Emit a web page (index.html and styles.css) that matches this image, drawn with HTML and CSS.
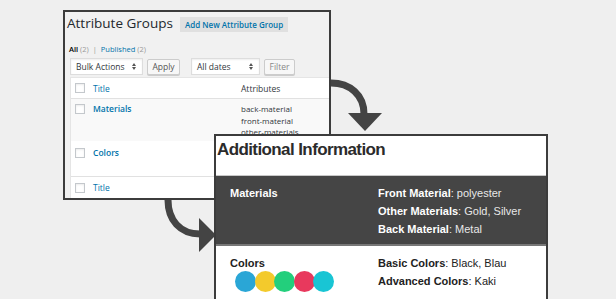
FILE: index.html
```html
<!DOCTYPE html>
<html lang="en">
<head>
    <meta charset="UTF-8">
    <meta name="viewport" content="width=device-width, initial-scale=1.0">
    <title>Attribute Groups</title>
    <link rel="stylesheet" href="styles.css">
</head>
<body>
    <div class="canvas">
        <!-- admin screen -->
        <section class="window wp-admin">
            <div class="page-title">
                <h1>Attribute Groups</h1>
                <span class="add-new">Add New Attribute Group</span>
            </div>

            <div class="subsubsub">
                <span class="current">All</span> <span class="count">(2)</span>
                <span class="sep">|</span>
                <a>Published</a> <span class="count">(2)</span>
            </div>

            <div class="tablenav">
                <div class="select bulk">Bulk Actions <svg class="updown" width="4" height="7" viewBox="0 0 4 7"><path d="M0 3 L2 0 L4 3 Z M0 4 L2 7 L4 4 Z" fill="#555"/></svg></div>
                <span class="button apply">Apply</span>
                <div class="select dates">All dates <svg class="updown" width="4" height="7" viewBox="0 0 4 7"><path d="M0 3 L2 0 L4 3 Z M0 4 L2 7 L4 4 Z" fill="#555"/></svg></div>
                <span class="button filter">Filter</span>
            </div>

            <div class="list-table">
                <div class="row head">
                    <span class="check"><i class="box"></i></span>
                    <a class="col-title">Title</a>
                    <span class="col-attr">Attributes</span>
                </div>
                <div class="row item alt">
                    <span class="check"><i class="box"></i></span>
                    <a class="col-title name">Materials</a>
                    <span class="col-attr">back-material<br>front-material<br>other-materials</span>
                </div>
                <div class="row item colors">
                    <span class="check"><i class="box"></i></span>
                    <a class="col-title name">Colors</a>
                    <span class="col-attr"></span>
                </div>
                <div class="row foot">
                    <span class="check"><i class="box"></i></span>
                    <a class="col-title">Title</a>
                    <span class="col-attr"></span>
                </div>
            </div>
        </section>

        <svg class="arrows" width="616" height="299" viewBox="0 0 616 299">
            <path d="M331 83 C350 83 364 95 364 114" fill="none" stroke="#444" stroke-width="7"/>
            <polygon points="348,113 382,113 365,131" fill="#444"/>
            <path d="M168 200 C168 220 180 234 200 234" fill="none" stroke="#444" stroke-width="7"/>
            <polygon points="199,218 199,252 216,235" fill="#444"/>
        </svg>

        <!-- product page tab -->
        <section class="window product-info">
            <h2>Additional Information</h2>

            <div class="attr-group dark">
                <span class="label">Materials</span>
                <div class="values">
                    <div><b>Front Material</b>: polyester</div>
                    <div><b>Other Materials</b>: Gold, Silver</div>
                    <div><b>Back Material</b>: Metal</div>
                </div>
            </div>

            <div class="attr-group light">
                <div>
                    <span class="label">Colors</span>
                    <div class="swatches">
                        <i style="background:#2aa6d6"></i>
                        <i style="background:#f3ca2c"></i>
                        <i style="background:#23cf7c"></i>
                        <i style="background:#e8395d"></i>
                        <i style="background:#19c5d4"></i>
                    </div>
                </div>
                <div class="values">
                    <div><b>Basic Colors</b>: Black, Blau</div>
                    <div><b>Advanced Colors</b>: Kaki</div>
                </div>
            </div>
        </section>
    </div>
</body>
</html>
```

FILE: styles.css
```css
body {
    margin: 0;
    background-color: #efefef;
    width: 616px;
    height: 299px;
    overflow: hidden;
}

.canvas {
    position: relative;
    width: 616px;
    height: 299px;
    overflow: hidden;
}

.window {
    position: absolute;
    box-sizing: border-box;
    border: 2px solid #3c3c3c;
    overflow: hidden;
}

/* admin screen */
.wp-admin {
    left: 63px;
    top: 10px;
    width: 268px;
    height: 190px;
    background-color: #f1f1f1;
    font-family: "Open Sans", sans-serif;
    color: #32373c;
}

.page-title {
    display: flex;
    align-items: center;
    gap: 7px;
    height: 24px;
    padding-left: 2px;
}

h1 {
    margin: 0;
    font-size: 13.5px;
    font-weight: 400;
    line-height: 1;
    color: #23282d;
}

.add-new {
    font-size: 8px;
    font-weight: 600;
    color: #0073aa;
    background-color: #e0e0e0;
    padding: 0 5px;
    height: 15px;
    line-height: 15px;
}

.subsubsub {
    margin-top: 7px;
    padding-left: 4px;
    font-size: 7.5px;
    line-height: 12px;
    color: #666;
}

.subsubsub .current {
    color: #000;
    font-weight: 600;
}

.subsubsub .count {
    color: #999;
}

.subsubsub .sep {
    color: #999;
    margin: 0 2px;
}

.subsubsub a {
    color: #0073aa;
}

.tablenav {
    display: flex;
    align-items: center;
    margin-top: 3px;
    padding-left: 5px;
    height: 17px;
    font-size: 8.5px;
}

.select {
    box-sizing: border-box;
    height: 17px;
    display: flex;
    align-items: center;
    justify-content: space-between;
    padding: 0 6px 0 5px;
    background-color: #fff;
    border: 1px solid #ddd;
    box-shadow: inset 0 1px 2px rgba(0,0,0,0.07);
    color: #32373c;
}

.select.bulk {
    width: 73px;
}

.select.dates {
    width: 69px;
    margin-left: 11px;
}

.button {
    box-sizing: border-box;
    height: 16px;
    line-height: 14px;
    text-align: center;
    margin-left: 4px;
    background-color: #f7f7f7;
    border: 1px solid #ccc;
    border-radius: 2px;
    box-shadow: 0 1px 0 #ccc;
    color: #555;
}

.button.apply {
    width: 33px;
}

.button.filter {
    width: 31px;
    color: #888;
}

.list-table {
    margin-top: 2px;
    margin-left: 5px;
    background-color: #fff;
    border: 1px solid #e5e5e5;
    border-right: none;
    font-size: 8px;
}

.row {
    display: grid;
    grid-template-columns: 22px 148px 1fr;
    box-sizing: border-box;
}

.check {
    padding-left: 4px;
}

.box {
    display: block;
    width: 10px;
    height: 10px;
    box-sizing: border-box;
    background-color: #fff;
    border: 1px solid #c4c8cc;
    box-shadow: inset 0 1px 2px rgba(0,0,0,0.08);
}

.col-title {
    color: #0073aa;
}

.row.head .col-title,
.row.head .col-attr,
.row.foot .col-title {
    font-size: 8.5px;
}

.col-title.name {
    font-weight: 600;
    font-size: 8.5px;
}

.row.head,
.row.foot {
    height: 21px;
    align-items: center;
}

.row.head {
    border-bottom: 1px solid #e1e1e1;
}

.row.foot {
    height: 22px;
    border-top: 1px solid #e1e1e1;
}

.row.item {
    align-items: start;
    line-height: 11.5px;
}

.row.item .box {
    margin-top: 1px;
}

.row.alt {
    height: 42px;
    padding-top: 4px;
    background-color: #f9f9f9;
}

.row.colors {
    height: 35px;
    padding-top: 6px;
}

/* product page tab */
.product-info {
    left: 214px;
    top: 134px;
    width: 334px;
    height: 165px;
    border-bottom: none;
    background-color: #fff;
    font-family: "Liberation Sans", Arial, sans-serif;
}

h2 {
    margin: 0;
    height: 39px;
    box-sizing: border-box;
    padding: 4px 0 0 1px;
    font-size: 17px;
    line-height: 20px;
    letter-spacing: -0.6px;
    font-weight: 700;
    color: #2b2b2b;
}

.attr-group {
    display: grid;
    grid-template-columns: 148px 1fr;
    padding: 8px 14px 6px;
    font-size: 11px;
    line-height: 18px;
}

.attr-group .label {
    font-weight: 700;
}

.attr-group.dark {
    background-color: #454545;
    color: #e8e8e8;
    border-top: 1px solid #c8c8c8;
    border-bottom: 2px solid #777;
}

.attr-group.dark .label,
.attr-group.dark b {
    color: #fff;
}

.attr-group.light {
    color: #222;
}

.swatches {
    display: flex;
    margin: -1px 0 0 5px;
}

.swatches i {
    width: 21px;
    height: 21px;
    border-radius: 50%;
    margin-right: -1.5px;
}

.arrows {
    position: absolute;
    left: 0;
    top: 0;
}
```
